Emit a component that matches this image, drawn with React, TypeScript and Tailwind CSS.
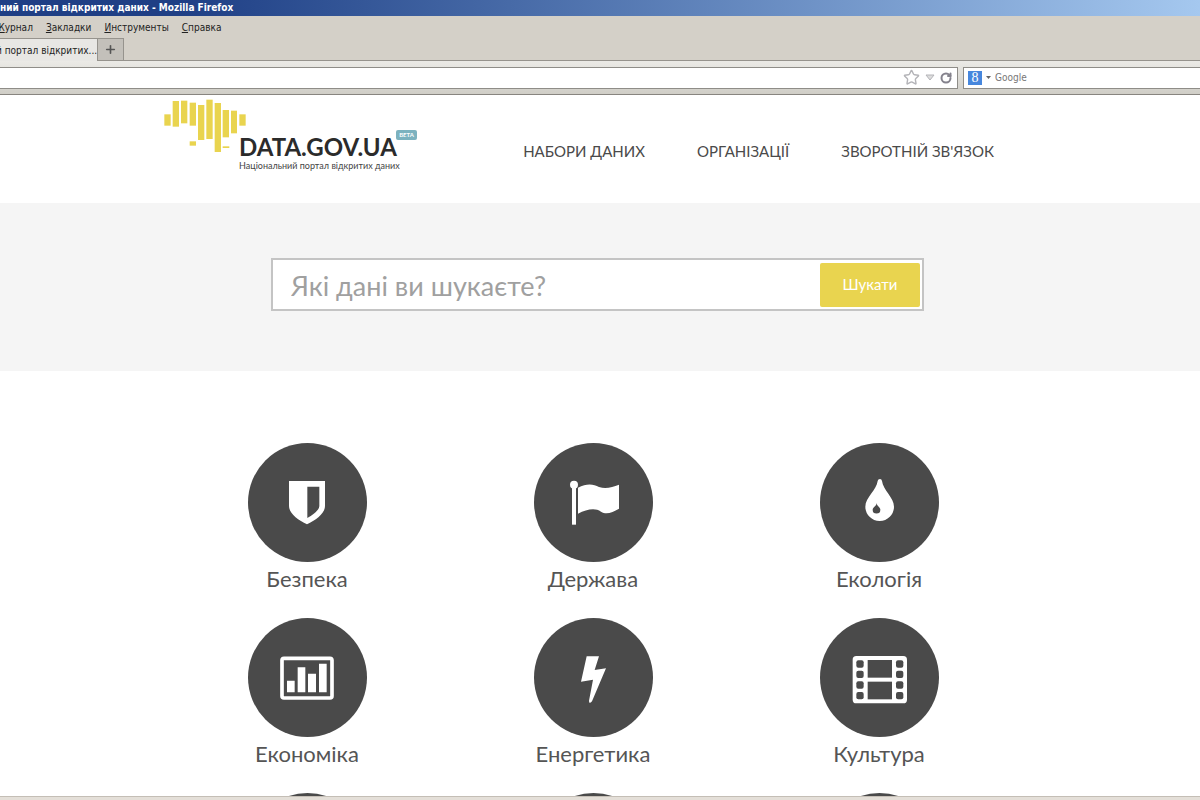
import React, { useState } from 'react';
import { Star, RotateCw, Plus } from 'lucide-react';

const menuItems = ['Журнал', 'Закладки', 'Инструменты', 'Справка'];
const navItems = ['Набори даних', 'Організації', "Зворотній зв'язок"];

// x, y, width, height of each stripe of the map
const stripes = [
  [43, 73, 19, 34], [68, 33, 19, 77], [93, 32, 19, 68], [119, 38, 19, 69], [144, 45, 19, 105], [169, 29, 19, 118],
  [194, 39, 19, 147], [218, 60, 19, 82], [243, 62, 18, 68], [268, 73, 19, 34], [119, 154, 19, 13], [218, 169, 20, 5],
];

const categories = [
  { name: 'Безпека', viewBox: '24 24 357 357', icon: (
    <path fillRule="evenodd" d="M147 138H255V213C255 235 228 255 201 268C174 255 147 235 147 213ZM202 155V249C218 240 238 226 238 212V155Z" />
  )},
  { name: 'Держава', viewBox: '27 24 357 357', icon: (
    <><circle cx="147" cy="149" r="12" /><rect x="141" y="150" width="12" height="119" /><path d="M159 158C185 145 205 147 222 156C245 164 262 155 282 149V221C262 232 245 240 228 230C210 217 185 223 159 236Z" /></>
  )},
  { name: 'Екологія', viewBox: '29 24 357 357', icon: (
    <path fillRule="evenodd" d="M209 132Q203 132 202 138C199 165 165 188 165 215A43 43 0 0 0 251 215C251 188 218 165 215 138Q214 132 209 132ZM199 203C199 213 187 216 187 224A11 11 0 0 0 210 224C210 216 199 213 199 203Z" />
  )},
  { name: 'Економіка', viewBox: '24 24 357 357', icon: (
    <><rect x="126" y="145" width="150" height="119" rx="6" fill="none" stroke="currentColor" strokeWidth="11" /><path d="M141 212H164V247H141ZM173 172H196V247H173ZM204 191H228V247H204ZM237 161H260V247H237Z" /></>
  )},
  { name: 'Енергетика', viewBox: '27 24 357 357', icon: (
    <path d="M185 139H222L209 180L243 175L201 274Q192 284 192 272L204 209L168 215Z" />
  )},
  { name: 'Культура', viewBox: '29 24 357 357', icon: (
    <>
      <rect x="127" y="138" width="163" height="142" rx="11" />
      <g className="text-[#4a4a4a]" fill="currentColor">
        {[151, 182, 214, 246].map(y => <React.Fragment key={y}><rect x="138" y={y} width="22" height="22" rx="6" /><rect x="257" y={y} width="22" height="22" rx="6" /></React.Fragment>)}
        <rect x="172" y="150" width="73" height="53" /><rect x="172" y="215" width="73" height="53" />
      </g>
    </>
  )},
];

function BrowserChrome() {
  return (
    <div className="shrink-0 bg-[#d4d0c8] font-['DejaVu_Sans_Condensed','DejaVu_Sans',sans-serif] text-[10px] text-[#222] whitespace-nowrap">
      <div className="h-4 bg-linear-to-r from-[#1f3f85] from-15% to-[#a5c8ef] text-white font-bold leading-4">ний портал відкритих даних - Mozilla Firefox</div>
      <div className="h-[22px] flex items-center gap-[13px] -ml-[5px]">
        {menuItems.map(m => <button key={m}><span className="underline">{m[0]}</span>{m.slice(1)}</button>)}
      </div>
      <div className="h-[23px] flex border-b border-[#96938d]">
        <button className="w-[102px] -ml-1 h-[23px] border-t border-r border-[#96938d] bg-[#e8e7e4] text-left">й портал відкритих...</button>
        <button className="w-[26px] flex items-center justify-center border-t border-r border-[#96938d] bg-[#c3c0ba]" aria-label="Новая вкладка"><Plus size={13} strokeWidth={3} className="text-[#555]" /></button>
      </div>
      <div className="h-[34px] flex items-center gap-[5px] bg-linear-to-b from-[#ebeae6] to-[#d0cec7] border-b border-[#88857f]">
        <div className="w-[958px] h-[22px] shrink-0 flex items-center gap-1 bg-white border border-l-0 border-[#8f8d88] pr-[5px] text-[#b4b4b8]">
          <input className="flex-1 h-full outline-none" aria-label="Адрес" />
          <Star size={17} strokeWidth={2} />
          <svg className="w-[10px] h-[7px] mx-[1px]" viewBox="0 0 10 7" fill="#ddd" stroke="currentColor"><path d="M1 1H9L5 6Z" /></svg>
          <RotateCw size={12} strokeWidth={4} className="text-[#85838d]" />
        </div>
        <div className="flex-1 h-[22px] flex items-center bg-white border border-r-0 border-[#8f8d88] pl-1">
          <div className="size-[14px] flex items-center justify-center bg-[#4787dd] text-white font-['Liberation_Serif',serif] text-[14px] leading-none">8</div>
          <svg className="w-[5px] h-[3px] mx-1" viewBox="0 0 5 3" fill="#666"><path d="M0 0H5L2.5 3Z" /></svg>
          <input className="flex-1 min-w-0 outline-none placeholder:text-[#777]" placeholder="Google" aria-label="Google" />
        </div>
      </div>
    </div>
  );
}

function Logo() {
  return (
    <a href="#" className="flex items-start">
      <svg className="w-[82px] h-[54px] shrink-0 text-[#e9d44f]" viewBox="42 27 246 162" fill="currentColor">
        {stripes.map(([x, y, w, h]) => <rect key={`${x}-${y}`} x={x} y={y} width={w} height={h} />)}
      </svg>
      <div className="relative -ml-[7px] pt-9">
        <p className="text-[24px] leading-6 font-bold text-[#2b2b2b]">DATA.GOV.UA</p>
        <p className="text-[9px] leading-[14px] text-[#444] whitespace-nowrap">Національний портал відкритих даних</p>
        <span className="absolute left-[157px] top-[31px] w-[21px] h-[10px] rounded-xs bg-[#7cb2bf] text-center text-[6px] leading-[10px] font-bold text-white">BETA</span>
      </div>
    </a>
  );
}

export default function App() {
  const [query, setQuery] = useState('');
  return (
    <div className="h-screen flex flex-col overflow-hidden bg-white font-['Lato','Open_Sans',sans-serif]">
      <BrowserChrome />
      <main className="flex-1 min-h-0 overflow-hidden">
        <header className="h-[108px] pr-[14px]">
          <div className="max-w-[858px] mx-auto flex pt-1">
            <Logo />
            <nav className="flex gap-[52px] ml-auto mr-7 pt-10 text-[15px] leading-6 uppercase text-[#4a4a4a] whitespace-nowrap">
              {navItems.map(n => <a key={n} href="#">{n}</a>)}
            </nav>
          </div>
        </header>
        <section className="h-[168px] pr-[14px] pt-[55px] bg-[#f5f5f5]">
          <div className="max-w-[858px] mx-auto pl-[107px] pr-[98px]">
            <form className="h-[53px] flex items-center bg-white border-2 border-[#c4c4c4] pr-[2px]" onSubmit={e => e.preventDefault()}>
              <input value={query} onChange={e => setQuery(e.target.value)} placeholder="Які дані ви шукаєте?" aria-label="Пошук" className="flex-1 min-w-0 h-full pl-[18px] pt-[2px] text-[27px] outline-none placeholder:text-[#a0a0a0]" />
              <button className="w-[100px] h-11 rounded-xs bg-[#e9d44f] text-[15px] text-white">Шукати</button>
            </form>
          </div>
        </section>
        <section className="pr-[14px] pt-[72px]">
          <div className="max-w-[858px] mx-auto grid grid-cols-3 gap-y-[22px] text-center text-[22px] leading-[34px] text-[#555]">
            {categories.map(c => (
              <a key={c.name} href="#">
                <svg className="size-[119px] mx-auto rounded-full bg-[#4a4a4a] text-white" viewBox={c.viewBox} fill="currentColor">{c.icon}</svg>
                {c.name}
              </a>
            ))}
            {[0, 1, 2].map(i => <div key={i} className="size-[119px] mx-auto rounded-full bg-[#4a4a4a]" />)}
          </div>
        </section>
      </main>
      <div className="h-1 shrink-0 border-t border-[#c4beb6] bg-[#e4dfd8]" />
    </div>
  );
}
